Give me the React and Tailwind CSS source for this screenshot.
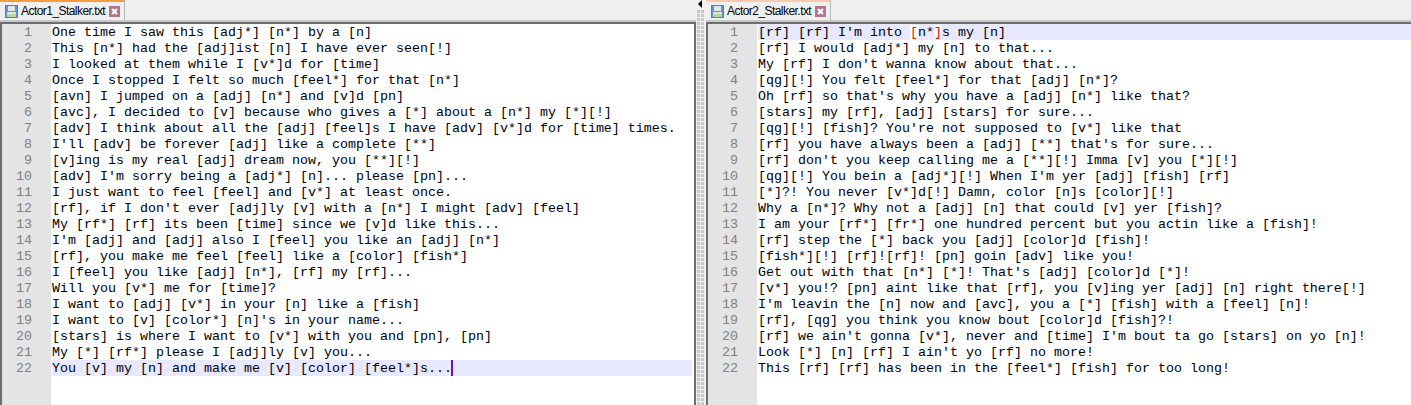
const leftLines = [
  'One time I saw this [adj*] [n*] by a [n]',
  'This [n*] had the [adj]ist [n] I have ever seen[!]',
  'I looked at them while I [v*]d for [time]',
  'Once I stopped I felt so much [feel*] for that [n*]',
  '[avn] I jumped on a [adj] [n*] and [v]d [pn]',
  '[avc], I decided to [v] because who gives a [*] about a [n*] my [*][!]',
  '[adv] I think about all the [adj] [feel]s I have [adv] [v*]d for [time] times.',
  "I'll [adv] be forever [adj] like a complete [**]",
  '[v]ing is my real [adj] dream now, you [**][!]',
  "[adv] I'm sorry being a [adj*] [n]... please [pn]...",
  'I just want to feel [feel] and [v*] at least once.',
  "[rf], if I don't ever [adj]ly [v] with a [n*] I might [adv] [feel]",
  'My [rf*] [rf] its been [time] since we [v]d like this...',
  "I'm [adj] and [adj] also I [feel] you like an [adj] [n*]",
  '[rf], you make me feel [feel] like a [color] [fish*]',
  'I [feel] you like [adj] [n*], [rf] my [rf]...',
  'Will you [v*] me for [time]?',
  'I want to [adj] [v*] in your [n] like a [fish]',
  "I want to [v] [color*] [n]'s in your name...",
  '[stars] is where I want to [v*] with you and [pn], [pn]',
  'My [*] [rf*] please I [adj]ly [v] you...',
  'You [v] my [n] and make me [v] [color] [feel*]s...',
]

const rightLines = [
  "[rf] [rf] I'm into [n*]s my [n]",
  '[rf] I would [adj*] my [n] to that...',
  "My [rf] I don't wanna know about that...",
  '[qg][!] You felt [feel*] for that [adj] [n*]?',
  "Oh [rf] so that's why you have a [adj] [n*] like that?",
  '[stars] my [rf], [adj] [stars] for sure...',
  "[qg][!] [fish]? You're not supposed to [v*] like that",
  "[rf] you have always been a [adj] [**] that's for sure...",
  "[rf] don't you keep calling me a [**][!] Imma [v] you [*][!]",
  "[qg][!] You bein a [adj*][!] When I'm yer [adj] [fish] [rf]",
  '[*]?! You never [v*]d[!] Damn, color [n]s [color][!]',
  'Why a [n*]? Why not a [adj] [n] that could [v] yer [fish]?',
  'I am your [rf*] [fr*] one hundred percent but you actin like a [fish]!',
  '[rf] step the [*] back you [adj] [color]d [fish]!',
  '[fish*][!] [rf]![rf]! [pn] goin [adv] like you!',
  "Get out with that [n*] [*]! That's [adj] [color]d [*]!",
  '[v*] you!? [pn] aint like that [rf], you [v]ing yer [adj] [n] right there[!]',
  "I'm leavin the [n] now and [avc], you a [*] [fish] with a [feel] [n]!",
  '[rf], [qg] you think you know bout [color]d [fish]?!',
  "[rf] we ain't gonna [v*], never and [time] I'm bout ta go [stars] on yo [n]!",
  "Look [*] [n] [rf] I ain't yo [rf] no more!",
  'This [rf] [rf] has been in the [feel*] [fish] for too long!',
]

function SaveIcon() {
  return (
    <svg width="13" height="13" viewBox="0 0 13 13" className="shrink-0">
      <rect x="0" y="0" width="13" height="13" fill="#5f93d3" />
      <rect x="0.5" y="0.5" width="12" height="12" fill="none" stroke="#5a7fae" />
      <rect x="3" y="1" width="7" height="5" fill="#dfe6ee" />
      <rect x="2" y="7" width="9" height="5" fill="#b6d79c" />
      <rect x="2" y="7" width="9" height="2" fill="#dcebcf" />
    </svg>
  )
}

function CloseIcon() {
  return (
    <svg width="11" height="11" viewBox="0 0 11 11" className="shrink-0">
      <rect width="11" height="11" fill="#b4728e" />
      <path d="M3 3l5 5M8 3l-5 5" stroke="#ffffff" strokeWidth="2.2" />
    </svg>
  )
}

function Tab({ name, active }) {
  return (
    <div className="flex h-5 w-[125px] shrink-0 flex-col border-r border-[#b8b8b8] bg-[#f0f0f0]">
      <div className={active ? 'h-[2px] bg-[#fa9c3c]' : 'h-[2px] bg-[#fbc9ae]'} />
      <div className="flex items-center pl-[5px] pt-[3px]">
        <SaveIcon />
        <span className="ml-[3px] w-[88px] whitespace-nowrap font-['Liberation_Sans',sans-serif] text-[12px] leading-[13px] tracking-[-0.55px] text-black">
          {name}
        </span>
        <CloseIcon />
      </div>
    </div>
  )
}

function CodeLine({ number, text, current, match }) {
  const rowBg = current ? 'bg-[#e8e8ff]' : 'bg-white'
  let body = text
  if (match) {
    const at = text.indexOf(match)
    const inner = match.slice(1, -1)
    body = (
      <>
        {text.slice(0, at)}
        <span className="bg-white text-[#ff0000]">[</span>
        {inner}
        <span className="bg-white text-[#ff0000]">]</span>
        {text.slice(at + match.length)}
      </>
    )
  }
  return (
    <div className="flex h-4 leading-[18px]">
      <div className="w-[49px] shrink-0 bg-[#e4e4e4] pr-[19px] text-right text-[#808080]">{number}</div>
      <div className={`ml-[1px] flex-1 whitespace-pre text-black ${rowBg}`}>
        {body}
        {current === 'caret' && <span className="inline-block h-4 w-[2px] translate-x-[-1px] bg-[#6a0dc8] align-top" />}
      </div>
    </div>
  )
}

function Pane({ name, lines, active, currentLine, caret, match, className, bodyClassName }) {
  return (
    <div className={`flex flex-col ${className}`}>
      <div className="flex h-5 bg-[#f0f0f0]">
        <Tab name={name} active={active} />
      </div>
      <div className="h-[2px] bg-[#c8c8c8]" />
      <div className={`flex flex-1 flex-col border-t-2 border-l-2 border-[#6e6e6e] ${bodyClassName}`}>
        <div className="font-['Liberation_Mono',monospace] text-[13.33px]">
          {lines.map((line, i) => (
            <CodeLine
              key={i}
              number={i + 1}
              text={line}
              current={i + 1 === currentLine ? (caret ? 'caret' : 'line') : null}
              match={i === 0 ? match : null}
            />
          ))}
        </div>
        <div className="w-[49px] flex-1 bg-[#e4e4e4]" />
      </div>
    </div>
  )
}

function Splitter() {
  return (
    <div className="relative w-[10px] shrink-0 bg-[#f0f0f0] pl-[1px] pt-[10px]">
      <div className="absolute left-[2px] top-0 h-0 w-0 border-y-[4px] border-r-[4px] border-y-transparent border-r-black" />
      <div className="grid grid-cols-[3px_3px] gap-[1px]">
        {Array.from({ length: 198 }).map((_, i) => (
          <div key={i} className="h-[3px] w-[3px] bg-[#c8c8c8]" />
        ))}
      </div>
    </div>
  )
}

export default function App() {
  return (
    <div className="flex h-[405px] w-[1411px] overflow-hidden bg-white">
      <Pane
        name="Actor1_Stalker.txt"
        lines={leftLines}
        active
        currentLine={22}
        caret
        className="w-[696px] shrink-0 bg-white"
        bodyClassName="border-r-2 pr-[2px]"
      />
      <Splitter />
      <Pane
        name="Actor2_Stalker.txt"
        lines={rightLines}
        currentLine={1}
        match="[n*]"
        className="min-w-0 flex-1 bg-white"
        bodyClassName=""
      />
    </div>
  )
}
